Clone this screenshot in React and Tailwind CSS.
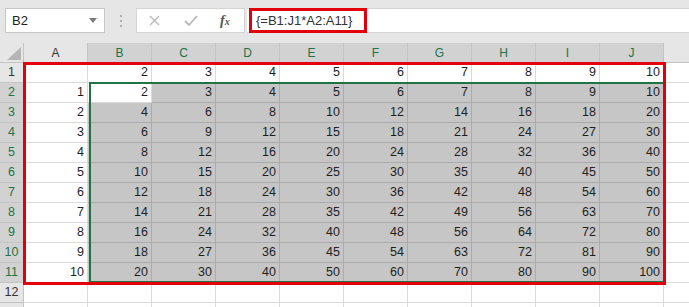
import React from 'react';

const COLS = ['A', 'B', 'C', 'D', 'E', 'F', 'G', 'H', 'I', 'J'];
const ROWS = [1, 2, 3, 4, 5, 6, 7, 8, 9, 10, 11, 12, 13];

// value shown in a cell: row 1 holds 2..10, column A holds 1..10, the rest is the product
const cellValue = (r, c) => {
    if (r > 11) return '';
    if (r === 1) return c === 0 ? '' : String(c + 1);
    if (c === 0) return String(r - 1);
    return String((c + 1) * (r - 1));
};

const isShaded = (r, c) => r >= 2 && r <= 11 && c >= 1 && !(r === 2 && c === 1);
const rowSelected = (r) => r >= 2 && r <= 11;

const NameBox = () => (
    <div className="ml-[5px] w-[100px] h-[25px] bg-white border border-[#c6c6c6] flex items-center justify-between pl-[6px] pr-[7px] text-[13px] text-[#222]">
        <span>B2</span>
        <svg width="8" height="5" viewBox="0 0 8 5">
            <path d="M0 0 L8 0 L4 5 Z" fill="#7a7a7a" />
        </svg>
    </div>
);

const FormulaButtons = () => (
    <div className="w-[109px] h-[25px] bg-white border border-[#d4d4d4] flex items-center">
        <svg className="ml-[12px]" width="11" height="11" viewBox="0 0 11 11">
            <path d="M1 1 L10 10 M10 1 L1 10" stroke="#b9b9b9" strokeWidth="1.4" />
        </svg>
        <svg className="ml-[24px]" width="14" height="11" viewBox="0 0 14 11">
            <path d="M1 6 L5 10 L13 1" stroke="#b9b9b9" strokeWidth="1.8" fill="none" />
        </svg>
        <span className="ml-[22px] text-[14px] italic font-bold text-[#555] leading-none" style={{ fontFamily: '"Liberation Serif", serif' }}>
            f<span className="text-[10px]">x</span>
        </span>
    </div>
);

const HeaderRow = () => (
    <div className="flex h-[20px]">
        <div className="w-[24px] shrink-0 border-r border-b border-[#c4c4c4] bg-[#e6e6e6] flex items-end justify-end pr-[2px] pb-[2px]">
            <svg width="14" height="13" viewBox="0 0 14 13">
                <path d="M14 0 L14 13 L0 13 Z" fill="#b5b5b5" />
            </svg>
        </div>
        {COLS.map((col, i) => (
            <div
                key={col}
                className={`w-[64px] shrink-0 border-r border-b border-[#c4c4c4] flex items-center justify-center text-[12px] ${
                    i === 0 ? 'bg-[#e6e6e6] text-[#333]' : 'bg-[#d2d2d2] text-[#217346]'
                }`}
            >
                {col}
            </div>
        ))}
        <div className="flex-1 border-b border-[#c4c4c4] bg-[#e6e6e6]" />
    </div>
);

const GridRow = ({ r }) => (
    <div className="flex h-[20px]">
        <div
            className={`w-[24px] shrink-0 border-r border-b border-[#c4c4c4] flex items-center justify-center text-[12.5px] ${
                rowSelected(r) ? 'bg-[#d2d2d2] text-[#217346]' : 'bg-[#e6e6e6] text-[#333]'
            }`}
        >
            {r < 13 ? r : ''}
        </div>
        {COLS.map((col, c) => (
            <div
                key={col}
                className={`w-[64px] shrink-0 border-r border-b flex items-center justify-end pr-[3px] text-[12.5px] text-[#1e1e1e] ${
                    isShaded(r, c) ? 'bg-[#c6c6c6] border-[#ababab]' : 'bg-white border-[#dadada]'
                }`}
            >
                {cellValue(r, c)}
            </div>
        ))}
        <div className="flex-1 bg-white border-b border-[#dadada]" />
    </div>
);

export default function App() {
    return (
        <div
            className="relative w-[689px] h-[307px] overflow-hidden bg-[#e6e6e6]"
            style={{ fontFamily: '"Liberation Sans", Arial, sans-serif' }}
        >
            {/* formula bar */}
            <div className="flex items-start h-[43px] pt-[8px]">
                <NameBox />
                <div className="w-[31px] h-[25px] flex flex-col items-center justify-center gap-[3px]">
                    <span className="w-[2px] h-[2px] bg-[#b0b0b0]" />
                    <span className="w-[2px] h-[2px] bg-[#b0b0b0]" />
                    <span className="w-[2px] h-[2px] bg-[#b0b0b0]" />
                </div>
                <FormulaButtons />
                <div className="ml-[2px] flex-1 h-[25px] bg-white border-y border-[#d4d4d4] pl-[2px]">
                    <div className="w-[118px] h-[25px] -mt-px border-[3px] border-[#e3000b] flex items-center pl-[4px] text-[13px] text-[#333]">
                        {'{=B1:J1*A2:A11}'}
                    </div>
                </div>
            </div>

            {/* sheet */}
            <div className="flex flex-col">
                <HeaderRow />
                {ROWS.map((r) => (
                    <GridRow key={r} r={r} />
                ))}
            </div>

            {/* selection outline B2:J11 */}
            <div className="absolute left-[89px] top-[82px] w-[576px] h-[201px] border-2 border-[#217346] pointer-events-none" />
            {/* red highlight A1:J11 */}
            <div className="absolute left-[23px] top-[62px] w-[643px] h-[223px] border-[3px] border-[#e3000b] pointer-events-none" />
        </div>
    );
}
